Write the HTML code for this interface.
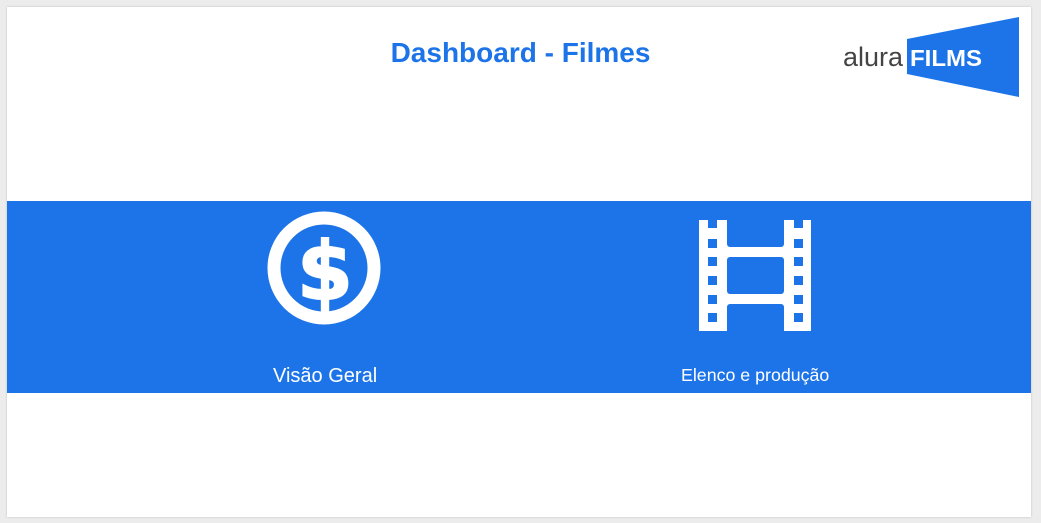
<!DOCTYPE html>
<html><head><meta charset="utf-8"><style>
html,body{margin:0;padding:0;}
body{width:1041px;height:523px;background:#ececec;position:relative;overflow:hidden;font-family:"Liberation Sans",sans-serif;}
.card{position:absolute;left:7px;top:7px;width:1024px;height:510px;background:#fff;box-shadow:0 0 2px rgba(0,0,0,.2);}
.title{position:absolute;left:0;width:1041px;top:37px;text-align:center;color:#1c74e8;font-weight:bold;font-size:28px;}
.band{position:absolute;left:7px;top:201px;width:1024px;height:192px;background:#1c74e8;}
.lbl{position:absolute;color:#fff;font-size:20px;}
</style></head><body>
<div class="card"></div>
<div class="title">Dashboard - Filmes</div>
<svg style="position:absolute;left:840px;top:15px" width="182" height="85">
<polygon points="67,24 179,2 179,82 67,59" fill="#1c74e8"/>
<text x="3" y="51" font-family="Liberation Sans" font-size="27" fill="#444" textLength="60" lengthAdjust="spacingAndGlyphs">alura</text>
<text x="70" y="51" font-family="Liberation Sans" font-weight="bold" font-size="23" fill="#fff" textLength="72" lengthAdjust="spacingAndGlyphs">FILMS</text>
</svg>
<div class="band"></div>
<svg style="position:absolute;left:0;top:0" width="1041" height="523">
<circle cx="324" cy="268" r="50" fill="none" stroke="#fff" stroke-width="13"/>
<text x="325" y="299" text-anchor="middle" font-family="DejaVu Sans" font-weight="bold" font-size="80" fill="#fff" stroke="#fff" stroke-width="2">$</text>
<rect x="699" y="220" width="112" height="111" fill="#fff"/>
<rect x="727" y="220" width="57" height="27" rx="3" fill="#1c74e8"/>
<rect x="727" y="210" width="57" height="20" fill="#1c74e8"/>
<rect x="727" y="257" width="57" height="37" rx="3" fill="#1c74e8"/>
<rect x="727" y="304" width="57" height="27" rx="3" fill="#1c74e8"/>
<rect x="727" y="320" width="57" height="11" fill="#1c74e8"/>
<g fill="#1c74e8">
<rect x="708" y="220" width="9" height="8"/><rect x="794" y="220" width="9" height="8"/>
<rect x="708" y="239" width="9" height="9"/><rect x="794" y="239" width="9" height="9"/>
<rect x="708" y="257" width="9" height="9"/><rect x="794" y="257" width="9" height="9"/>
<rect x="708" y="276" width="9" height="9"/><rect x="794" y="276" width="9" height="9"/>
<rect x="708" y="295" width="9" height="9"/><rect x="794" y="295" width="9" height="9"/>
<rect x="708" y="313" width="9" height="9"/><rect x="794" y="313" width="9" height="9"/>
</g>
</svg>
<div class="lbl" style="left:273px;top:365px;">Visão Geral</div>
<div class="lbl" style="left:681px;top:365px;font-size:17.8px;">Elenco e produção</div>
</body></html>
